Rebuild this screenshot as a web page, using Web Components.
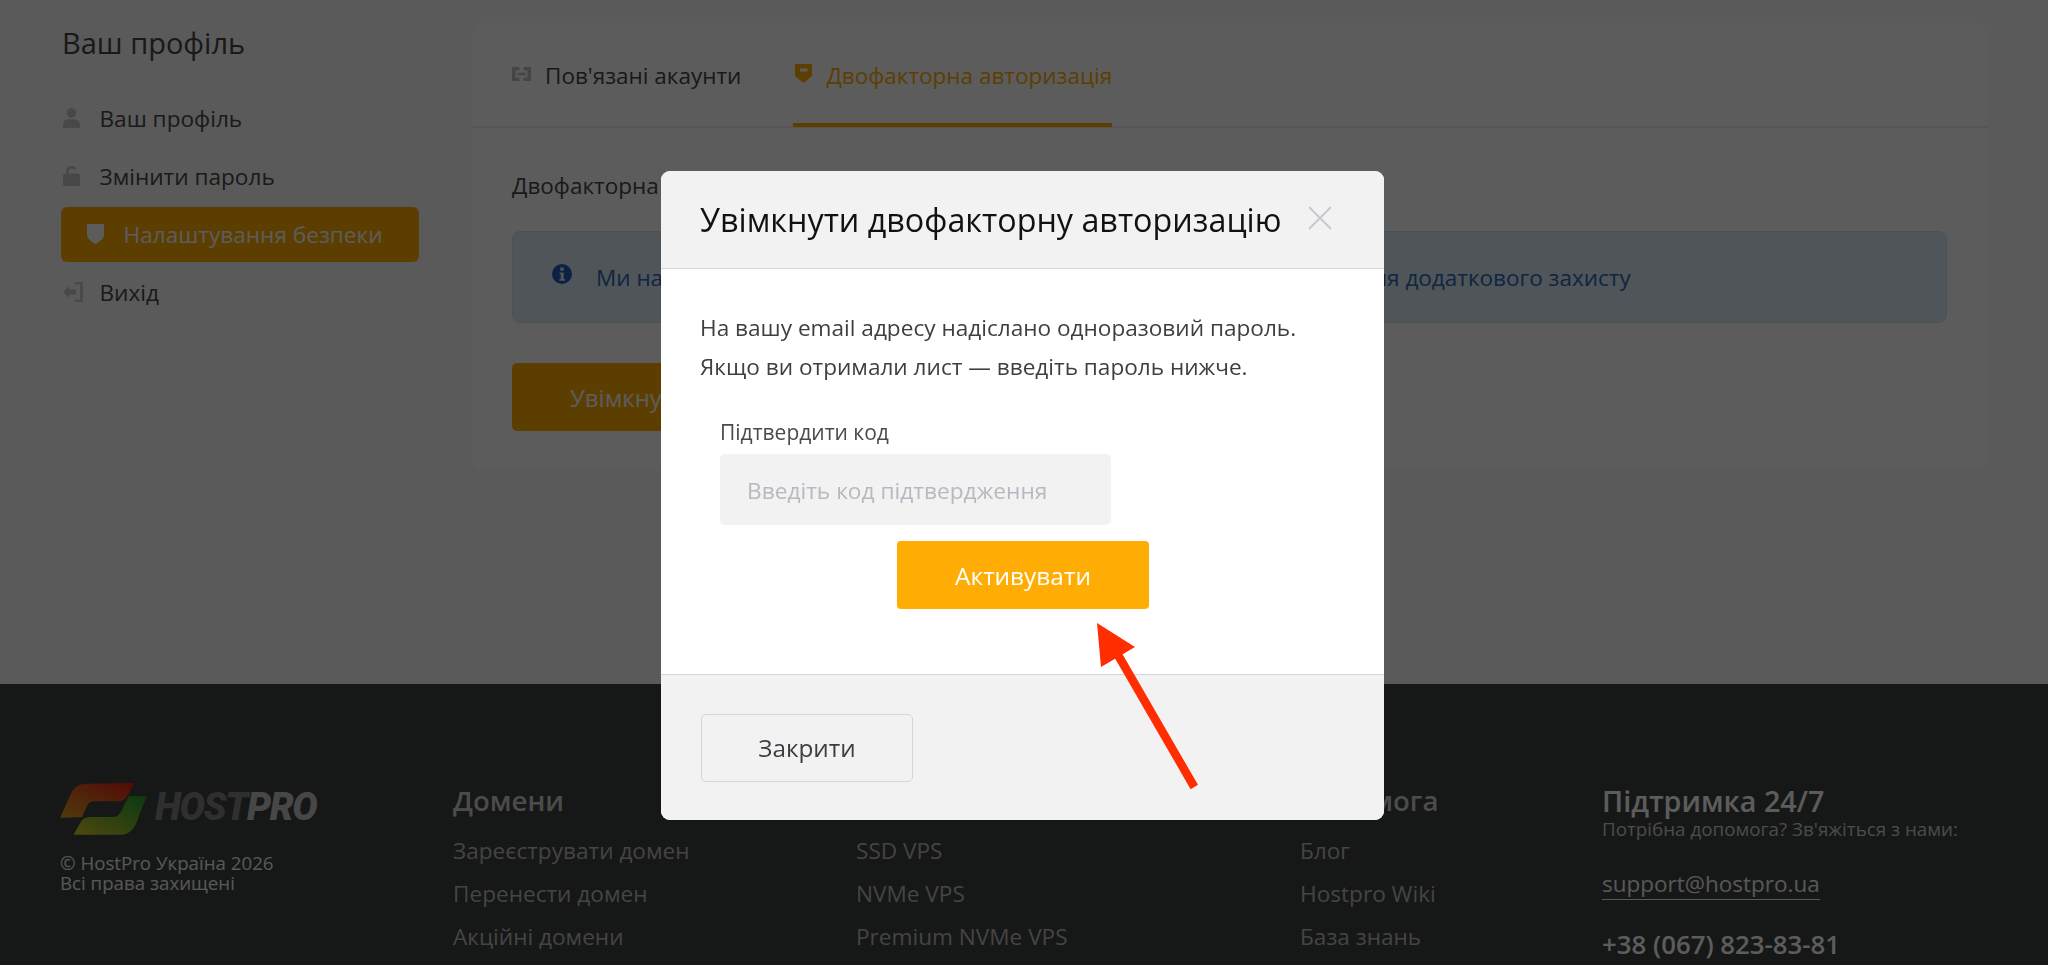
<!DOCTYPE html>
<html lang="uk"><head><meta charset="utf-8"><title>HostPro</title>
<style>
html,body{margin:0;padding:0;height:965px;overflow:hidden;background:#f9f9f9;font-family:"Open Sans","Noto Sans",sans-serif;color:#474747}
</style></head>
<body>
<hp-app>
  <hp-sidebar heading="Ваш профіль" slot="side">
    <hp-nav-item icon="user">Ваш профіль</hp-nav-item>
    <hp-nav-item icon="lock">Змінити пароль</hp-nav-item>
    <hp-nav-item icon="shield" active>Налаштування безпеки</hp-nav-item>
    <hp-nav-item icon="exit">Вихід</hp-nav-item>
  </hp-sidebar>
  <hp-card slot="main">
    <hp-tab icon="link" slot="tabs">Пов'язані акаунти</hp-tab>
    <hp-tab icon="tag" active slot="tabs">Двофакторна авторизація</hp-tab>
    <hp-security></hp-security>
  </hp-card>
  <hp-footer slot="footer"></hp-footer>
</hp-app>
<hp-overlay>
  <hp-modal heading="Увімкнути двофакторну авторизацію"></hp-modal>
  <hp-arrow></hp-arrow>
</hp-overlay>
<script>
const ICONS={
 user:'<svg width="17" height="20" viewBox="0 0 17 20"><circle cx="8.5" cy="5" r="4.8" fill="currentColor"/><path d="M0 20v-3.5C0 13 3 11.2 6 11.2h5c3 0 6 1.800 6 5.300V20z" fill="currentColor"/></svg>',
 lock:'<svg width="17" height="20" viewBox="0 0 17 20"><rect x="0" y="7.500" width="17" height="12.500" rx="1.500" fill="currentColor"/><path d="M4.500 9V5a4 4 0 0 1 7.600-1.700" fill="none" stroke="currentColor" stroke-width="2.800"/></svg>',
 shield:'<svg width="17" height="20" viewBox="0 0 17 20"><path d="M0 0h17v11c0 3-4.500 7-8.500 9C4.500 18 0 14 0 11z" fill="currentColor"/></svg>',
 exit:'<svg width="20" height="20" viewBox="0 0 20 20"><path d="M12 1h6.500v18H12" fill="none" stroke="currentColor" stroke-width="2.600"/><path d="M0 10l6.500-6v3.500H13v5H6.500V16z" fill="currentColor"/></svg>',
 link:'<svg width="19" height="14" viewBox="0 0 19 14"><path d="M7.500 1.800H1.800v10.400h5.700M11.500 1.800h5.700v10.400h-5.700" fill="none" stroke="currentColor" stroke-width="3.600"/><path d="M5.500 7h8" stroke="currentColor" stroke-width="2.600"/></svg>',
 tag:'<svg width="17" height="19" viewBox="0 0 17 19"><path fill-rule="evenodd" d="M1 0h15a1 1 0 0 1 1 1v11l-8.500 7L0 12V1a1 1 0 0 1 1-1zM5 4.500v3h7.500v-3z" fill="currentColor"/></svg>',
 info:'<svg width="20" height="20" viewBox="0 0 20 20"><path fill-rule="evenodd" d="M10 0a10 10 0 1 0 0 20 10 10 0 0 0 0-20zM8.300 3.500h3.400v3.200H8.300zM7.500 8.500h4.200v6.500h1.300v1.800H7.500V15h1.200v-4.700H7.500z" fill="currentColor"/></svg>'
};
function def(name,css,html,init){
  customElements.define(name,class extends HTMLElement{
    constructor(){super();this.attachShadow({mode:'open'});}
    connectedCallback(){
      const h=typeof html==='function'?html(this):html;
      this.shadowRoot.innerHTML='<style>'+css+'</style>'+h;
      if(init)init(this);
    }
  });
}
def('hp-app',`:host{display:block;width:2048px;height:965px;overflow:hidden}
.top{display:flex;height:684px;box-sizing:border-box;padding:23px 61px 0}
.s{display:block;width:358px;flex:none}.m{display:block;margin-left:54px;width:1514px;flex:none}`,
`<div class="top"><div class="s"><slot name="side"></slot></div><div class="m"><slot name="main"></slot></div></div><slot name="footer"></slot>`);
def('hp-sidebar',`:host{display:block}
h2{margin:0 0 22px 1px;height:46px;line-height:40px;font-size:29px;font-weight:400;color:#474747}
.l{display:flex;flex-direction:column;gap:3px}`,
e=>`<h2>${e.getAttribute('heading')}</h2><div class="l"><slot></slot></div>`);
def('hp-nav-item',`:host{display:flex;align-items:center;height:55px;font-size:22.600px;color:#4a4a4a;box-sizing:border-box;padding-left:2px;border-radius:6px}
:host([active]){background:#ffad05;color:#fff;padding-left:26px}
i{display:flex;width:37px;flex:none;color:#c8c8c8;margin-top:-2px}
:host([active]) i{color:#fff}
span{line-height:1;margin:2px 0 0 -.5px}`,
e=>`<i>${ICONS[e.getAttribute('icon')]}</i><span><slot></slot></span>`);
def('hp-card',`:host{display:block;background:#fff;border-radius:10px;height:447px;box-sizing:border-box}
.t{display:flex;height:103px;padding-left:39px;border-bottom:2px solid #ececec;gap:52px}`,
`<div class="t"><slot name="tabs"></slot></div><slot></slot>`);
def('hp-tab',`:host{display:flex;align-items:center;height:104px;box-sizing:border-box;font-size:22.500px;color:#474747;gap:14px;padding-top:5px;border-bottom:4px solid transparent}
:host([active]){color:#ffad05;border-bottom-color:#ffad05;padding-left:2px}
i{display:flex;color:#c0c0c0;margin-top:-4px}:host([active]) i{color:#ffad05;}`,
e=>`<i>${ICONS[e.getAttribute('icon')]}</i><slot></slot>`);
def('hp-security',`:host{display:block;padding:43px 39px 0;font-size:22.500px}
p{margin:0;line-height:30px;color:#474747}
.a{display:flex;align-items:center;gap:24px;height:92px;margin:30px 0 40px;padding-left:39px;box-sizing:border-box;width:1435px;background:#dbecf5;border:1px solid #cfe2ef;border-radius:8px;color:#2e68b0;font-size:22.500px}
.a i{display:flex;margin-top:-6px;color:#1f5fb8}
button{display:block;height:68px;padding:0 58px;border:0;border-radius:5px;background:#ffad05;color:#fff;font:inherit;font-size:24px}`,
`<p>Двофакторна авторизація</p><div class="a"><i>${ICONS.info}</i><span>Ми настійно рекомендуємо застосовувати двофакторну авторизацію для додаткового захисту</span></div><button>Увімкнути двофакторну авторизацію</button>`);
def('hp-logo',`:host{display:flex;align-items:center;gap:8px;height:53px}
svg{display:block}
b{font-family:Roboto,sans-serif;font-style:italic;font-weight:900;font-size:38px;line-height:1;letter-spacing:-1.400px;color:#828282;margin-top:-3px}
b span{color:#c4c4c4}`,
`<svg width="87" height="52" viewBox="30 38 260 156"><defs>
<linearGradient id="a" x1="0" y1="1" x2="1" y2="0"><stop offset="0" stop-color="#d8a020"/><stop offset="1" stop-color="#e82018"/></linearGradient>
<linearGradient id="b" x1="0" y1="1" x2="1" y2="0"><stop offset="0" stop-color="#d8c828"/><stop offset="1" stop-color="#20a030"/></linearGradient></defs>
<path fill="url(#a)" d="M252 38L230 80Q222 92 205 93L130 93Q118 94 112 105L95 141L30 142L60 75Q72 42 105 40Z"/>
<path fill="url(#b)" d="M290 78L265 140Q252 190 215 193L70 193L95 150Q105 140 120 140L190 140Q205 138 212 125L235 78Z"/></svg>
<b>HOST<span>PRO</span></b>`);
def('hp-footer',`:host{display:grid;grid-template-columns:393px 403px 444px 302px 1fr;height:281px;box-sizing:border-box;padding:98px 0 0 60px;background:#3e4040;overflow:hidden;color:#bdbdbd}
.c{font-size:18.700px;line-height:20px;margin-top:18px;color:#f0f0f0}`,
`<div><hp-logo></hp-logo><div class="c">© HostPro Україна 2026<br>Всі права захищені</div></div>
<hp-footer-col heading="Домени"><a>Зареєструвати домен</a><a>Перенести домен</a><a>Акційні домени</a></hp-footer-col>
<hp-footer-col heading="VPS"><a>SSD VPS</a><a>NVMe VPS</a><a>Premium NVMe VPS</a></hp-footer-col>
<hp-footer-col heading="Допомога"><a>Блог</a><a>Hostpro Wiki</a><a>База знань</a></hp-footer-col>
<hp-support></hp-support>`);
def('hp-footer-col',`:host{display:block}
h3{margin:-2px 0 9px;font-size:27.600px;line-height:40px;font-weight:600;color:#d0d0d0}
::slotted(a){display:block;font-size:22.600px;line-height:43px;color:#bcbcbc}`,
e=>`<h3>${e.getAttribute('heading')}</h3><slot></slot>`);
def('hp-support',`:host{display:block;color:#d8d8d8}
h3{margin:-1px 0 0;font-size:28.700px;line-height:40px;font-weight:600;color:#fff}
.n{font-size:18.800px;line-height:22px;margin-top:-3px;color:#d0d0d0}
a{display:inline-block;font-size:22.500px;line-height:30px;margin-top:29px;border-bottom:1.500px solid #f0f0f0;text-decoration:none;color:#f0f0f0}
.p{font-size:25.800px;line-height:34px;margin-top:27px;font-weight:600;color:#fff}`,
`<h3>Підтримка 24/7</h3><div class="n">Потрібна допомога? Зв'яжіться з нами:</div><a>support@hostpro.ua</a><div class="p">+38 (067) 823-83-81</div>`);
def('hp-overlay',`:host{position:fixed;left:0;top:0;width:2048px;height:965px;background:rgba(0,0,0,.64);display:block;box-sizing:border-box;padding:171px 0 0 661px}`,`<slot></slot>`);
def('hp-modal',`:host{display:block;width:723px;height:649px;border-radius:9px;background:#fff;overflow:hidden;color:#474747}
header{display:flex;align-items:center;height:98px;box-sizing:border-box;padding:0 52px 0 39px;background:#f2f2f2;border-bottom:1px solid #d6d6d6}
h1{flex:1;margin:0;font-size:32.300px;font-weight:400;color:#111;white-space:nowrap;margin-top:-2px}
.x{display:flex;margin-top:-4px}
main{height:405px;box-sizing:border-box;padding:40px 39px 0}
p{margin:0;font-size:22.600px;line-height:38.500px;color:#3f3f3f}
label{display:block;margin:29px 0 0 20px;font-size:21px;line-height:34px;color:#4a4a4a}
.i{display:flex;align-items:center;margin:5px 0 0 20px;width:391px;height:71px;box-sizing:border-box;padding:1px 0 0 27px;background:#f2f2f2;border-radius:5px;font-size:22.700px;color:#b6b9c0}
.act{display:flex;align-items:center;justify-content:center;margin:16px 0 0 197px;width:252px;height:68px;background:#ffad05;border-radius:4px;color:#fff;font-size:24.400px}
footer{height:146px;box-sizing:border-box;padding:39px 40px 0;background:#f2f2f2;border-top:1px solid #d6d6d6}
.c{display:flex;align-items:center;justify-content:center;width:212px;height:68px;box-sizing:border-box;border:1.500px solid #d6d6d6;border-radius:5px;padding-bottom:2px;font-size:24.300px;color:#3d3d45}`,
e=>`<header><h1>${e.getAttribute('heading')}</h1><span class="x"><svg width="24" height="24" viewBox="0 0 24 24"><path d="M1 1l22 22M23 1L1 23" stroke="#c5c8cf" stroke-width="1.800" fill="none"/></svg></span></header>
<main><p>На вашу email адресу надіслано одноразовий пароль.<br>Якщо ви отримали лист — введіть пароль нижче.</p>
<label>Підтвердити код</label><div class="i">Введіть код підтвердження</div><div class="act">Активувати</div></main>
<footer><div class="c">Закрити</div></footer>`);
def('hp-arrow',`:host{position:absolute;left:1090px;top:615px;width:120px;height:180px;display:block}svg{display:block}`,
`<svg width="120" height="180" viewBox="1090 615 120 180"><path d="M1194.300 787L1118 655" stroke="#ff2d00" stroke-width="8.500" fill="none"/><path d="M1097 623L1135 647L1101 667Z" fill="#ff2d00"/></svg>`);
</script>
</body></html>
